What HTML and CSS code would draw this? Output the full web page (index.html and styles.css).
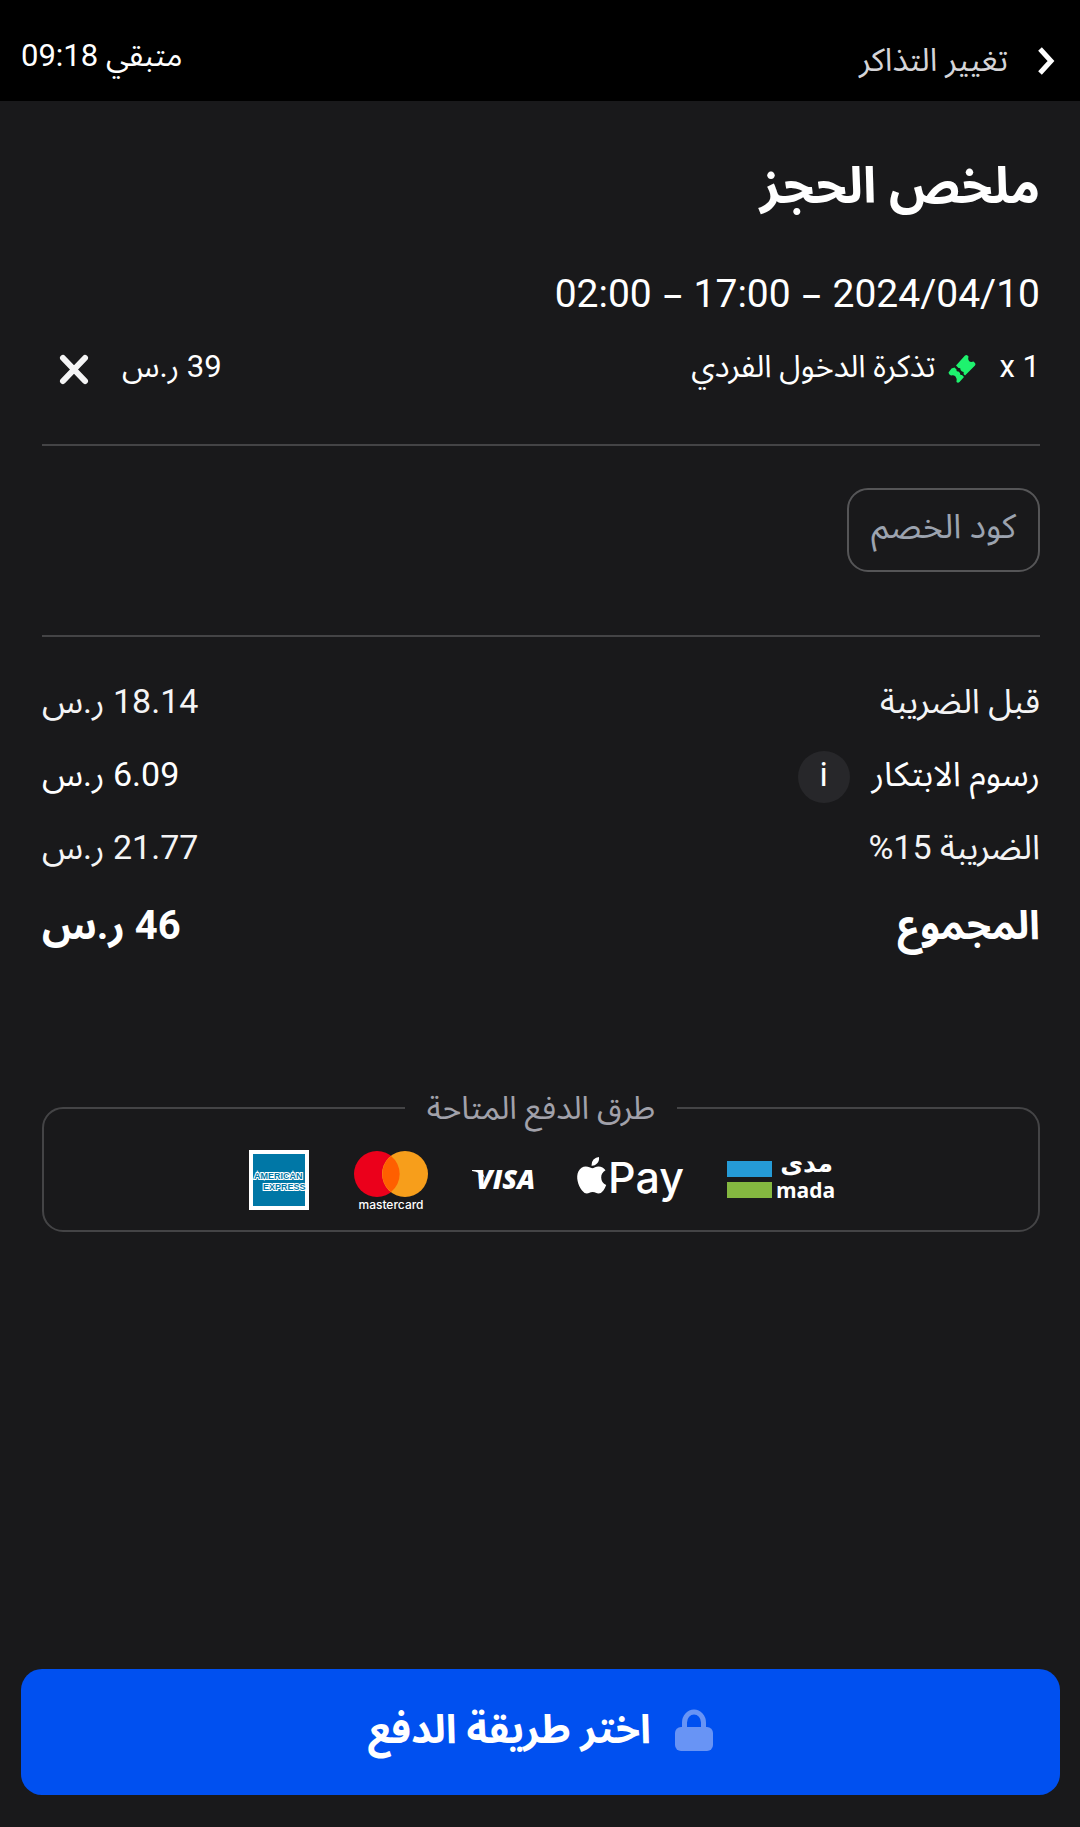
FILE: index.html
```html
<!DOCTYPE html>
<html lang="ar" dir="rtl">
<head>
    <meta charset="UTF-8">
    <meta name="viewport" content="width=device-width, initial-scale=1.0">
    <title>ملخص الحجز</title>
    <link rel="stylesheet" href="styles.css">
</head>

<body>
    <header class="top-bar">
        <a href="#" class="back-link">
            <svg class="back-icon" viewBox="0 0 16 26" aria-hidden="true">
                <path d="M2 2l11 12-11 12" fill="none" stroke="#fff" stroke-width="5"/>
            </svg>
            <span>تغيير التذاكر</span>
        </a>
        <p class="timer">متبقي 09:18</p>
    </header>

    <main>
        <h1>ملخص الحجز</h1>

        <section class="ticket">
            <h2>2024/04/10<span class="dash"> – </span>17:00<span class="dash"> – </span>02:00</h2>
            <div class="row ticket-row">
                <div class="ticket-name">
                    <span dir="ltr">x 1</span>
                    <svg class="ticket-icon" viewBox="0 0 28 28" aria-hidden="true">
                        <path d="M17 .5q1.500-1 2.500 0l1 1q-1 3 .5 4.500 1.500 1.500 4.500 .5l1.500 1.500q1 1 0 2.500l-10 10-1.500-1.500q1-2.500-1.500-2.500l-1.500-1.500q.5-2.500-2-2l-2.500-2.500z" fill="#1ef26e"/>
                        <path d="M6.500 12.500l2 2q-.5 2.500 2 2l1.500 1.500q-.5 2.500 2 2l2 2-4.500 5q-1.500 1.500-3 0 .5-4-1-5.500-2-2-4.500-1-2.500-1-2.500-3l3-4z" fill="#1ef26e"/>
                    </svg>
                    <span>تذكرة الدخول الفردي</span>
                </div>
                <div class="ticket-price">
                    <span>39 ر.س</span>
                    <button type="button" class="remove" aria-label="حذف">
                        <svg viewBox="0 0 28 30" aria-hidden="true">
                            <path d="M3 4l22 23M25 4L3 27" stroke="#f4f4f5" stroke-width="6" stroke-linecap="round"/>
                        </svg>
                    </button>
                </div>
            </div>
        </section>

        <section class="promo">
            <button type="button" class="promo-btn">كود الخصم</button>
        </section>

        <section class="totals">
            <div class="row light">
                <span>قبل الضريبة</span>
                <span>18.14 ر.س</span>
            </div>
            <div class="row">
                <span class="fee">رسوم الابتكار <button type="button" class="info">i</button></span>
                <span>6.09 ر.س</span>
            </div>
            <div class="row light">
                <span>الضريبة <bdi dir="ltr">%15</bdi></span>
                <span>21.77 ر.س</span>
            </div>
            <div class="row total">
                <span>المجموع</span>
                <span>46 ر.س</span>
            </div>
        </section>

        <fieldset class="methods">
            <legend>طرق الدفع المتاحة</legend>
            <div class="logos">
                <svg class="mada" viewBox="0 0 106 38" direction="ltr" role="img" aria-label="mada">
                    <rect y="0" width="45" height="16" fill="#259bd7"/>
                    <rect y="21" width="45" height="16" fill="#84b740"/>
                    <text class="mada-ar" x="106" y="11" direction="rtl">مدى</text>
                    <text class="mada-en" x="49" y="37">mada</text>
                </svg>
                <svg class="apple" viewBox="0 0 106 46" direction="ltr" role="img" aria-label="Apple Pay">
                    <path d="M22 0q.5 4-2 6.500-2.300 2.500-5.500 2.300-.4-3.500 2-6.200Q19 .3 22 0z" fill="#fff"/>
                    <path d="M21.500 9.500q4.500.2 7 3.800-4.400 2.700-4.300 7.300.1 5.400 5 7.500-1 3-3 5.600-2 2.700-4.500 2.800c-2.400 0-3.200-1.400-6-1.400s-3.600 1.400-6 1.400q-2.400 0-4.700-3C1 28.500-1.500 20 1.500 14.300q2.500-4.600 7.300-4.700c2.800 0 4.600 1.600 6.400 1.600 1.700 0 3.700-1.700 6.300-1.700z" fill="#fff"/>
                    <text class="pay" x="31" y="36">Pay</text>
                </svg>
                <svg class="visa" viewBox="0 0 62 22" direction="ltr" role="img" aria-label="Visa">
                    <path d="M1 1h9l4 8Q9 3 1 2z" fill="#fff"/>
                    <text class="visa-text" x="5" y="20">VISA</text>
                </svg>
                <svg class="mastercard" viewBox="0 0 74 60" direction="ltr" role="img" aria-label="Mastercard">
                    <circle cx="24" cy="24" r="23" fill="#eb001b"/>
                    <circle cx="52" cy="24" r="23" fill="#f79e1b"/>
                    <path d="M38 6a23 23 0 0 1 0 36a23 23 0 0 1 0-36z" fill="#ff5f00"/>
                    <text class="mc-text" x="38" y="59">mastercard</text>
                </svg>
                <svg class="amex" viewBox="0 0 60 60" direction="ltr" role="img" aria-label="American Express">
                    <rect width="60" height="60" fill="#fff"/>
                    <rect x="4" y="4" width="52" height="52" fill="#0077a6"/>
                    <text class="amex-text" x="5" y="29">AMERICAN</text>
                    <text class="amex-text" x="14" y="40">EXPRESS</text>
                </svg>
            </div>
        </fieldset>
    </main>

    <footer>
        <button type="button" class="pay-btn">
            <svg class="lock" viewBox="0 0 38 42" aria-hidden="true">
                <path d="M9.500 18V13.500a9.500 10.500 0 0 1 19 0V18" fill="none" stroke="#6894f5" stroke-width="5"/>
                <rect y="18" width="38" height="24" rx="6" fill="#6894f5"/>
            </svg>
            <span>اختر طريقة الدفع</span>
        </button>
    </footer>
</body>
</html>
```
FILE: styles.css
```css
/* General Styles */
* {
    margin: 0;
    padding: 0;
    box-sizing: border-box;
}

body {
    font-family: Roboto, 'Noto Sans Arabic', 'DejaVu Sans', sans-serif;
    font-size: 31px;
    line-height: 48px;
    min-height: 100vh;
    background: #19191b;
    color: #fff;
    display: flex;
    flex-direction: column;
}

button {
    font: inherit;
    color: inherit;
    border: none;
    background: none;
    cursor: pointer;
}

svg {
    display: block;
    overflow: visible;
}

/* Top bar */
.top-bar {
    display: flex;
    justify-content: space-between;
    background: #000;
    padding: 32px 21px 17px;
}

.back-link {
    display: flex;
    align-items: center;
    gap: 30px;
    padding: 4px 5px 0;
    color: #d4d4d8;
    font-size: 32px;
    text-decoration: none;
}

.back-icon {
    width: 16px;
    height: 26px;
}

/* Booking summary */
main {
    flex: 1;
    padding: 53px 40px 0 42px;
}

h1 {
    font-size: 50px;
    line-height: 64px;
}

h2 {
    font-size: 39px;
    font-weight: normal;
    line-height: 48px;
}

.dash {
    padding: 0 1px;
    font-family: 'Noto Sans', sans-serif;
}

.row {
    display: flex;
    justify-content: space-between;
    align-items: center;
}

.ticket {
    padding: 50px 0 53px;
    border-bottom: 2px solid #444446;
}

.ticket-row {
    padding-top: 25px;
}

.ticket-name {
    display: flex;
    align-items: center;
    gap: 12px;
}

.ticket-icon {
    width: 28px;
    height: 28px;
    margin: 4px 12px 0 0;
}

.ticket-price {
    display: flex;
    align-items: center;
    gap: 34px;
}

.remove {
    padding: 4px 0 0 18px;
}

.remove svg {
    width: 28px;
    height: 30px;
}

/* Promo code */
.promo {
    padding: 42px 0 63px;
    border-bottom: 2px solid #444446;
}

.promo-btn {
    display: block;
    height: 84px;
    padding: 0 22px 8px;
    border: 2px solid #555557;
    border-radius: 21px;
    color: #9ca3af;
    font-size: 34px;
}

/* Totals */
.totals {
    padding-top: 28px;
    font-size: 34px;
    line-height: 73px;
}

.light {
    color: #f4f4f5;
}

.fee {
    display: flex;
    align-items: center;
    gap: 22px;
}

.info {
    width: 52px;
    height: 52px;
    margin-top: 4px;
    border-radius: 50%;
    background: #27272a;
    line-height: 44px;
    padding-bottom: 6px;
}

.total {
    font-size: 40px;
    font-weight: bold;
    line-height: 84px;
}

/* Payment methods */
.methods {
    margin-top: 116px;
    border: 2px solid #444446;
    border-radius: 21px;
}

.methods legend {
    margin: 0 auto;
    padding: 0 22px;
    color: #a1a1aa;
    font-size: 32px;
}

.logos {
    display: flex;
    justify-content: center;
    align-items: center;
    gap: 44px;
    padding: 18px 0 20px;
}

.mada {
    width: 106px;
    height: 38px;
}

.mada-ar {
    font: bold 25px 'DejaVu Sans', sans-serif;
    fill: #fff;
}

.mada-en {
    font: bold 21px 'Open Sans', sans-serif;
    fill: #fff;
}

.apple {
    width: 106px;
    height: 46px;
}

.pay {
    font: 500 43px Inter, sans-serif;
    fill: #fff;
}

.visa {
    width: 62px;
    height: 22px;
}

.visa-text {
    font: italic 800 27px 'Open Sans', sans-serif;
    fill: #fff;
}

.mastercard {
    width: 74px;
    height: 60px;
}

.mc-text {
    font: 500 12px Inter, sans-serif;
    fill: #fff;
    text-anchor: middle;
}

.amex {
    width: 60px;
    height: 60px;
}

.amex-text {
    font: bold 9px 'Liberation Sans', sans-serif;
    fill: #0077a6;
    stroke: #fff;
    stroke-width: 2px;
    paint-order: stroke;
}

/* Pay button */
footer {
    padding: 0 20px 32px 21px;
}

.pay-btn {
    display: flex;
    justify-content: center;
    align-items: center;
    gap: 24px;
    width: 100%;
    height: 126px;
    padding-bottom: 4px;
    border-radius: 21px;
    background: #0050f0;
    font-size: 40px;
    font-weight: bold;
}

.lock {
    width: 38px;
    height: 42px;
}
```
